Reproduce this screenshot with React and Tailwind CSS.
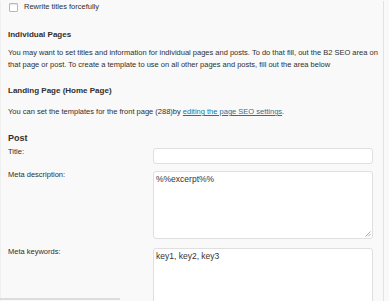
import React from 'react';

const fieldClass =
  'block w-[220px] bg-white border border-[#dfdfdf] rounded-[3px] outline-none text-[#333] resize-none';

const App = () => {
  return (
    <div className="w-[389px] h-[301px] overflow-hidden bg-[#f9f9f9] relative font-['Liberation_Sans',Arial,sans-serif] text-[#2f2f2f] text-[7.5px]">
      <div className="w-[384px] h-full border-l border-l-[#efefef] border-r border-r-[#e2e2e2] pl-[7px] pr-[2px]">
        {/* Rewrite titles */}
        <label className="flex items-center h-[12px] mt-[1px] pl-[1px]">
          <span className="w-[9px] h-[9px] border border-[#b4b9be] bg-white rounded-[1px] shadow-[inset_0_1px_1px_rgba(0,0,0,0.1)]"></span>
          <span className="ml-[6px] leading-[12px]">Rewrite titles forcefully</span>
        </label>

        {/* Individual Pages */}
        <h3 className="mt-[16px] font-bold text-[8px] leading-[12px]">Individual Pages</h3>
        <p className="mt-[6px] leading-[12px] whitespace-nowrap">
          You may want to set titles and information for individual pages and posts. To do that fill, out the B2 SEO area on
          <br />
          that page or post. To create a template to use on all other pages and posts, fill out the area below
        </p>

        {/* Landing page */}
        <h3 className="mt-[14px] font-bold text-[8px] leading-[12px]">Landing Page (Home Page)</h3>
        <p className="mt-[9px] leading-[12px] whitespace-nowrap">
          You can set the templates for the front page (288)by{' '}
          <a className="text-[#21759b] underline">editing the page SEO settings</a>.
        </p>

        {/* Post */}
        <h3 className="mt-[13px] font-semibold text-[9px] leading-[14px]">Post</h3>

        <div className="flex items-start mt-[1px]">
          <div className="w-[145px] leading-[12px]">Title:</div>
          <input className={`${fieldClass} mt-[2px] h-[16px]`} />
        </div>

        <div className="flex items-start mt-[5px]">
          <div className="w-[145px] leading-[12px]">Meta description:</div>
          <div className="relative mt-[2px]">
            <textarea
              defaultValue="%%excerpt%%"
              className={`${fieldClass} h-[68px] px-[2px] pt-[2px] text-[8.5px] leading-[11px]`}
            />
            <svg className="absolute right-[2px] bottom-[2px]" width="6" height="6" viewBox="0 0 6 6">
              <path d="M5.5 0.5 L0.5 5.5 M5.5 3 L3 5.5" stroke="#aaa" strokeWidth="1" />
            </svg>
          </div>
        </div>

        <div className="flex items-start mt-[7px]">
          <div className="w-[145px] leading-[12px]">Meta keywords:</div>
          <textarea
            defaultValue="key1, key2, key3"
            className={`${fieldClass} mt-[2px] h-[68px] px-[2px] pt-[2px] text-[8.5px] leading-[11px]`}
          />
        </div>
      </div>
      <div className="absolute left-0 bottom-[1px] w-[120px] h-[2px] bg-[#dcdcdc]"></div>
    </div>
  );
};

export default App;
